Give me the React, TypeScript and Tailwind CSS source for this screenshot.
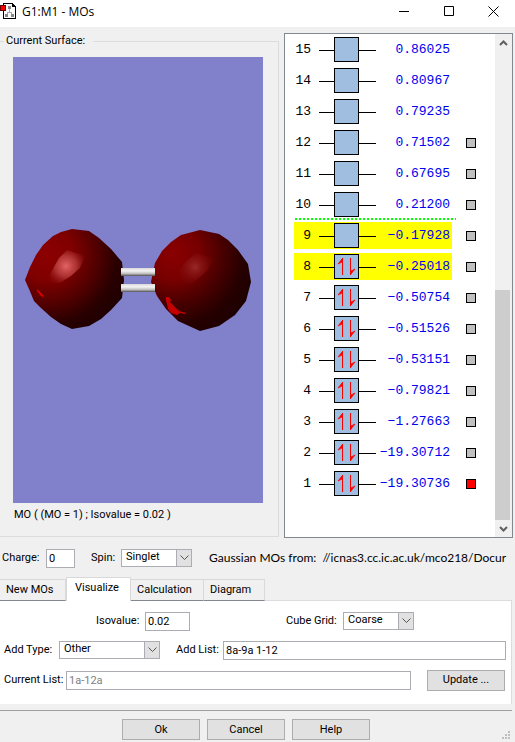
import { useState } from 'react';
import type { ReactNode } from 'react';

type Orbital = { n: number; energy: string; occupied?: boolean; selected?: boolean; box?: 'idle' | 'shown' };

const orbitals: Orbital[] = [
    { n: 15, energy: '0.86025' },
    { n: 14, energy: '0.80967' },
    { n: 13, energy: '0.79235' },
    { n: 12, energy: '0.71502', box: 'idle' },
    { n: 11, energy: '0.67695', box: 'idle' },
    { n: 10, energy: '0.21200', box: 'idle' },
    { n: 9, energy: '−0.17928', selected: true, box: 'idle' },
    { n: 8, energy: '−0.25018', occupied: true, selected: true, box: 'idle' },
    { n: 7, energy: '−0.50754', occupied: true, box: 'idle' },
    { n: 6, energy: '−0.51526', occupied: true, box: 'idle' },
    { n: 5, energy: '−0.53151', occupied: true, box: 'idle' },
    { n: 4, energy: '−0.79821', occupied: true, box: 'idle' },
    { n: 3, energy: '−1.27663', occupied: true, box: 'idle' },
    { n: 2, energy: '−19.30712', occupied: true, box: 'idle' },
    { n: 1, energy: '−19.30736', occupied: true, box: 'shown' },
];

const tabs = ['New MOs', 'Visualize', 'Calculation', 'Diagram'];
const tabWidths = ['w-[66px]', 'w-[65px]', 'w-[73px]', 'w-[61px]'];

function TitleBar() {
    return (
        <header className="flex h-[27px] items-start bg-white">
            <svg className="mt-[3px] h-4 w-4 shrink-0" viewBox="0 0 16 16" shapeRendering="crispEdges">
                <path d="M3.500 .5h9l3 3v12h-12z" fill="#fff" stroke="#000" />
                <path d="M12 0v4h4z" fill="#000" />
                <path d="M9 5h1v4h2v3h-1v-2H8v2H7V9h2z" fill="#aaa" />
                <rect x="8" y="3" width="3" height="3" fill="#888" />
                <rect x="5" y="11" width="3" height="3" fill="#888" />
                <rect x="11" y="11" width="3" height="3" fill="#888" />
                <rect x=".5" y="2.500" width="5" height="5" fill="#f00" stroke="#600" />
            </svg>
            <h1 className="ml-[6px] mt-1 flex-1 font-['Open_Sans','Noto_Sans',sans-serif] text-[12px] leading-4">G1:M1 - MOs</h1>
            <div className="flex">
                <button aria-label="Minimize" className="flex h-[22px] w-11 items-center justify-center">
                    <svg width="11" height="11" viewBox="0 0 11 11" stroke="#000"><path d="M0 5.500h10" /></svg>
                </button>
                <button aria-label="Maximize" className="flex h-[22px] w-[46px] items-center justify-center">
                    <svg width="11" height="11" viewBox="0 0 11 11" fill="none" stroke="#000"><path d="M.5 .5h9v9h-9z" /></svg>
                </button>
                <button aria-label="Close" className="flex h-[22px] w-[43px] items-center justify-center">
                    <svg width="11" height="11" viewBox="0 0 11 11" stroke="#000"><path d="M.5 .5l10 10M10.500 .5l-10 10" /></svg>
                </button>
            </div>
        </header>
    );
}

function Molecule() {
    return (
        <svg viewBox="0 0 250 120" className="w-full" role="img" aria-label="Molecular orbital surface">
            <defs>
                <radialGradient id="lobeLeft" gradientUnits="userSpaceOnUse" cx="34" cy="34" r="86">
                    <stop offset="0" stopColor="#8c0000" />
                    <stop offset=".3" stopColor="#800000" />
                    <stop offset=".58" stopColor="#520000" />
                    <stop offset=".82" stopColor="#280000" />
                    <stop offset="1" stopColor="#200000" />
                </radialGradient>
                <radialGradient id="lobeRight" gradientUnits="userSpaceOnUse" cx="160" cy="34" r="86">
                    <stop offset="0" stopColor="#8a0000" />
                    <stop offset=".3" stopColor="#780000" />
                    <stop offset=".58" stopColor="#480000" />
                    <stop offset=".82" stopColor="#260000" />
                    <stop offset="1" stopColor="#1e0000" />
                </radialGradient>
                <radialGradient id="shineLeft" gradientUnits="userSpaceOnUse" cx="53" cy="46" r="24">
                    <stop offset="0" stopColor="#e46464" />
                    <stop offset=".45" stopColor="#b83c3c" stopOpacity=".8" />
                    <stop offset="1" stopColor="#800000" stopOpacity="0" />
                </radialGradient>
                <radialGradient id="shineRight" gradientUnits="userSpaceOnUse" cx="182" cy="47" r="22">
                    <stop offset="0" stopColor="#982828" />
                    <stop offset="1" stopColor="#780000" stopOpacity="0" />
                </radialGradient>
                <linearGradient id="bond" x1="0" y1="0" x2="0" y2="1">
                    <stop offset="0" stopColor="#d8d8d8" />
                    <stop offset=".35" stopColor="#f4f4f4" />
                    <stop offset=".7" stopColor="#c0c0c0" />
                    <stop offset="1" stopColor="#505050" />
                </linearGradient>
            </defs>
            <path fill="url(#lobeLeft)" d="M59 9L76 11 86 18 98 29 109 42 111 60 109 78 98 90 88 99 76 106 59 109 48 104 38 97 28 88 21 81 16 69 12 60 17 47 23 35 30 25 40 16 48 12z" />
            <path fill="url(#lobeRight)" d="M187 10L206 14 215 20 225 30 235 44 238 62 233 81 222 95 206 106 187 111 176 106 165 101 153 89 144 76 138 62 140 52 142 43 149 31 158 22 168 15z" />
            <path fill="url(#shineLeft)" d="M36 63L37 54 46 38 54 30 63 33 72 36 67 48 58 56 47 63z" />
            <path fill="url(#shineRight)" d="M164 54L172 42 183 33 201 38 195 50 179 64 168 63z" />
            <path fill="#e00000" d="M24 69l6 6v2l-2-1-4-5z" />
            <path fill="#c40000" d="M153 77h3l2 3-1 2 5 5 4 4 7 2-1 1-5-1-3 2-6-2-3-4-1-5-1-3z" />
            <rect x="108" y="48" width="34" height="8" fill="url(#bond)" />
            <rect x="108" y="64" width="34" height="8" fill="url(#bond)" />
        </svg>
    );
}

function OrbitalRow({ n, energy, occupied, selected, box }: Orbital) {
    return (
        <li className="flex h-[31px] items-center">
            <div className={`ml-[9px] flex h-[27px] w-[158px] items-center ${selected ? 'bg-[#ffff00]' : ''}`}>
                <span className="w-[17px] text-right">{n}</span>
                <svg className="ml-2 shrink-0" width="57" height="25" viewBox="0 0 57 25">
                    <path d="M0 13.500h57" stroke="#000" />
                    <rect x="15.500" y=".5" width="24" height="24" fill="#a0bee0" stroke="#000" />
                    {occupied && (
                        <g stroke="#f00" fill="#f00">
                            <path d="M23.500 4v17M31.500 4v17" />
                            <path d="M23 5v3l-4 2zM32 20v-3l4-2z" strokeWidth=".7" />
                        </g>
                    )}
                </svg>
                <span className="flex-1 pr-[2px] text-right text-[#0000ee]">{energy}</span>
            </div>
            {box && (
                <input
                    type="checkbox"
                    aria-label={`Surface ${n}`}
                    defaultChecked={box === 'shown'}
                    className="ml-[14px] h-[10px] w-[10px] appearance-none border border-black bg-[#c0c0c0] checked:bg-[#ff0000]"
                />
            )}
        </li>
    );
}

function Select({ id, width, children }: { id: string; width: string; children: ReactNode }) {
    return (
        <div className={`relative h-[18px] ${width}`}>
            <select id={id} className="block h-full w-full appearance-none border border-[#abadb3] bg-white pb-[2px] pl-1 leading-[14px]">
                {children}
            </select>
            <span className="pointer-events-none absolute inset-y-0 right-0 flex w-4 items-center justify-center border border-[#abadb3] bg-[#e1e1e1]">
                <svg width="9" height="6" viewBox="0 0 9 6" fill="none" stroke="#555"><path d="M.5 .5l4 4 4-4" /></svg>
            </span>
        </div>
    );
}

const inputClass = 'h-[19px] min-w-0 border border-[#abadb3] bg-white px-[2px]';
const buttonClass = 'h-[21px] w-[78px] border border-[#adadad] bg-[#e1e1e1]';

export default function App() {
    const [activeTab, setActiveTab] = useState('Visualize');

    return (
        <div className="w-full bg-[#f0f0f0] font-['Roboto','Liberation_Sans',sans-serif] text-[11px] leading-4 text-black">
            <TitleBar />
            <main>
                <div className="flex pr-[2px] pt-[6px]">
                    <fieldset className="mb-px mr-[5px] min-w-0 flex-1 border border-l-0 border-[#dcdcdc] pl-[13px] pr-[15px]">
                        <legend className="-ml-[9px] pl-[2px] pr-2">Current Surface:</legend>
                        <div className="mt-2 flex h-[446px] items-center bg-[#8080cb]">
                            <Molecule />
                        </div>
                        <p className="mt-1 pl-px">MO ( (MO = 1) ; Isovalue = 0.02 )</p>
                    </fieldset>
                    <div className="flex w-[229px] shrink-0 border border-[#828790] bg-white">
                        <div className="relative flex-1 pb-[38px]">
                            <ul className="font-['Liberation_Mono',monospace] text-[13px]">
                                {orbitals.map((o) => <OrbitalRow key={o.n} {...o} />)}
                            </ul>
                            {/* HOMO / LUMO gap */}
                            <svg className="absolute left-[10px] top-[184px]" width="161" height="2"><path d="M0 1h161" stroke="#0f0" strokeWidth="2" strokeDasharray="2 2" /></svg>
                        </div>
                        <div className="flex w-[17px] flex-col bg-[#f0f0f0]">
                            <button aria-label="Scroll up" className="flex h-[17px] items-center justify-center">
                                <svg width="9" height="6" viewBox="0 0 9 6" fill="none" stroke="#606060" strokeWidth="2"><path d="M1 5l3.500-3.500L8 5" /></svg>
                            </button>
                            <div className="flex flex-1 flex-col justify-end"><div className="h-[49%] w-[15px] bg-[#cdcdcd]" /></div>
                            <button aria-label="Scroll down" className="flex h-[17px] items-center justify-center">
                                <svg width="9" height="6" viewBox="0 0 9 6" fill="none" stroke="#606060" strokeWidth="2"><path d="M1 1l3.500 3.500L8 1" /></svg>
                            </button>
                        </div>
                    </div>
                </div>

                <div className="mt-[10px] flex h-5 items-center whitespace-nowrap pl-[2px]">
                    <label htmlFor="charge" className="w-11">Charge:</label>
                    <input id="charge" defaultValue="0" className={`${inputClass} w-[29px]`} />
                    <label htmlFor="spin" className="ml-4 w-[30px]">Spin:</label>
                    <Select id="spin" width="w-[71px]"><option>Singlet</option></Select>
                    <p className="ml-[17px] flex-1 whitespace-pre font-['Lato','Open_Sans',sans-serif] text-[12px]">Gaussian MOs from:  //icnas3.cc.ic.ac.uk/mco218/Docur</p>
                </div>

                <div className="mr-[3px] mt-[9px]">
                    <div className="flex items-end" role="tablist">
                        {tabs.map((tab, i) => (
                            <button
                                key={tab}
                                role="tab"
                                aria-selected={activeTab === tab}
                                onClick={() => setActiveTab(tab)}
                                className={`border-r border-t border-[#d9d9d9] text-left ${tabWidths[i]} ${
                                activeTab === tab ? 'h-6 border-l bg-white pb-1 pl-2' : 'h-[22px] border-b border-b-[#828790] pl-[6px]'
                                }`}
                            >
                                {tab}
                            </button>
                        ))}
                        <div className="flex-1 border-b border-[#dcdcdc]" />
                    </div>
                    <div className="border-r border-[#dcdcdc] bg-white pb-[13px] pl-1 pr-[5px] pt-[10px]">
                        <div className="flex h-5 items-center">
                            <label htmlFor="isovalue" className="ml-[92px] w-[49px]">Isovalue:</label>
                            <input id="isovalue" defaultValue="0.02" className={`${inputClass} w-[45px]`} />
                            <label htmlFor="grid" className="ml-auto w-[57px]">Cube Grid:</label>
                            <Select id="grid" width="w-[71px] mr-[92px]"><option>Coarse</option></Select>
                        </div>
                        <div className="mt-[9px] flex h-5 items-center">
                            <label htmlFor="type" className="w-[55px]">Add Type:</label>
                            <Select id="type" width="w-[101px]"><option>Other</option></Select>
                            <label htmlFor="list" className="ml-4 w-[47px]">Add List:</label>
                            <input id="list" defaultValue="8a-9a 1-12" className={`${inputClass} flex-1`} />
                        </div>
                        <div className="mt-[9px] flex h-[22px] items-center">
                            <label htmlFor="current" className="w-[62px]">Current List:</label>
                            <input id="current" readOnly value="1a-12a" className={`${inputClass} flex-1 text-[#808080]`} />
                            <button className={`${buttonClass} ml-4 mr-px`}>Update ...</button>
                        </div>
                    </div>
                </div>
            </main>
            <footer className="mr-[3px] mt-[6px] flex border-t border-[#a0a0a0] pb-[2px] pt-2">
                <div className="flex flex-1 justify-center gap-[7px] pr-[22px]">
                    <button className={buttonClass}>Ok</button>
                    <button className={buttonClass}>Cancel</button>
                    <button className={buttonClass}>Help</button>
                </div>
                <svg className="-ml-3 mt-3" width="10" height="10" viewBox="0 0 10 10" fill="#bfbfbf">
                    <path d="M6 0h2v2H6zM3 3h2v2H3zM6 3h2v2H6zM0 6h2v2H0zM3 6h2v2H3zM6 6h2v2H6z" />
                </svg>
            </footer>
        </div>
    );
}
